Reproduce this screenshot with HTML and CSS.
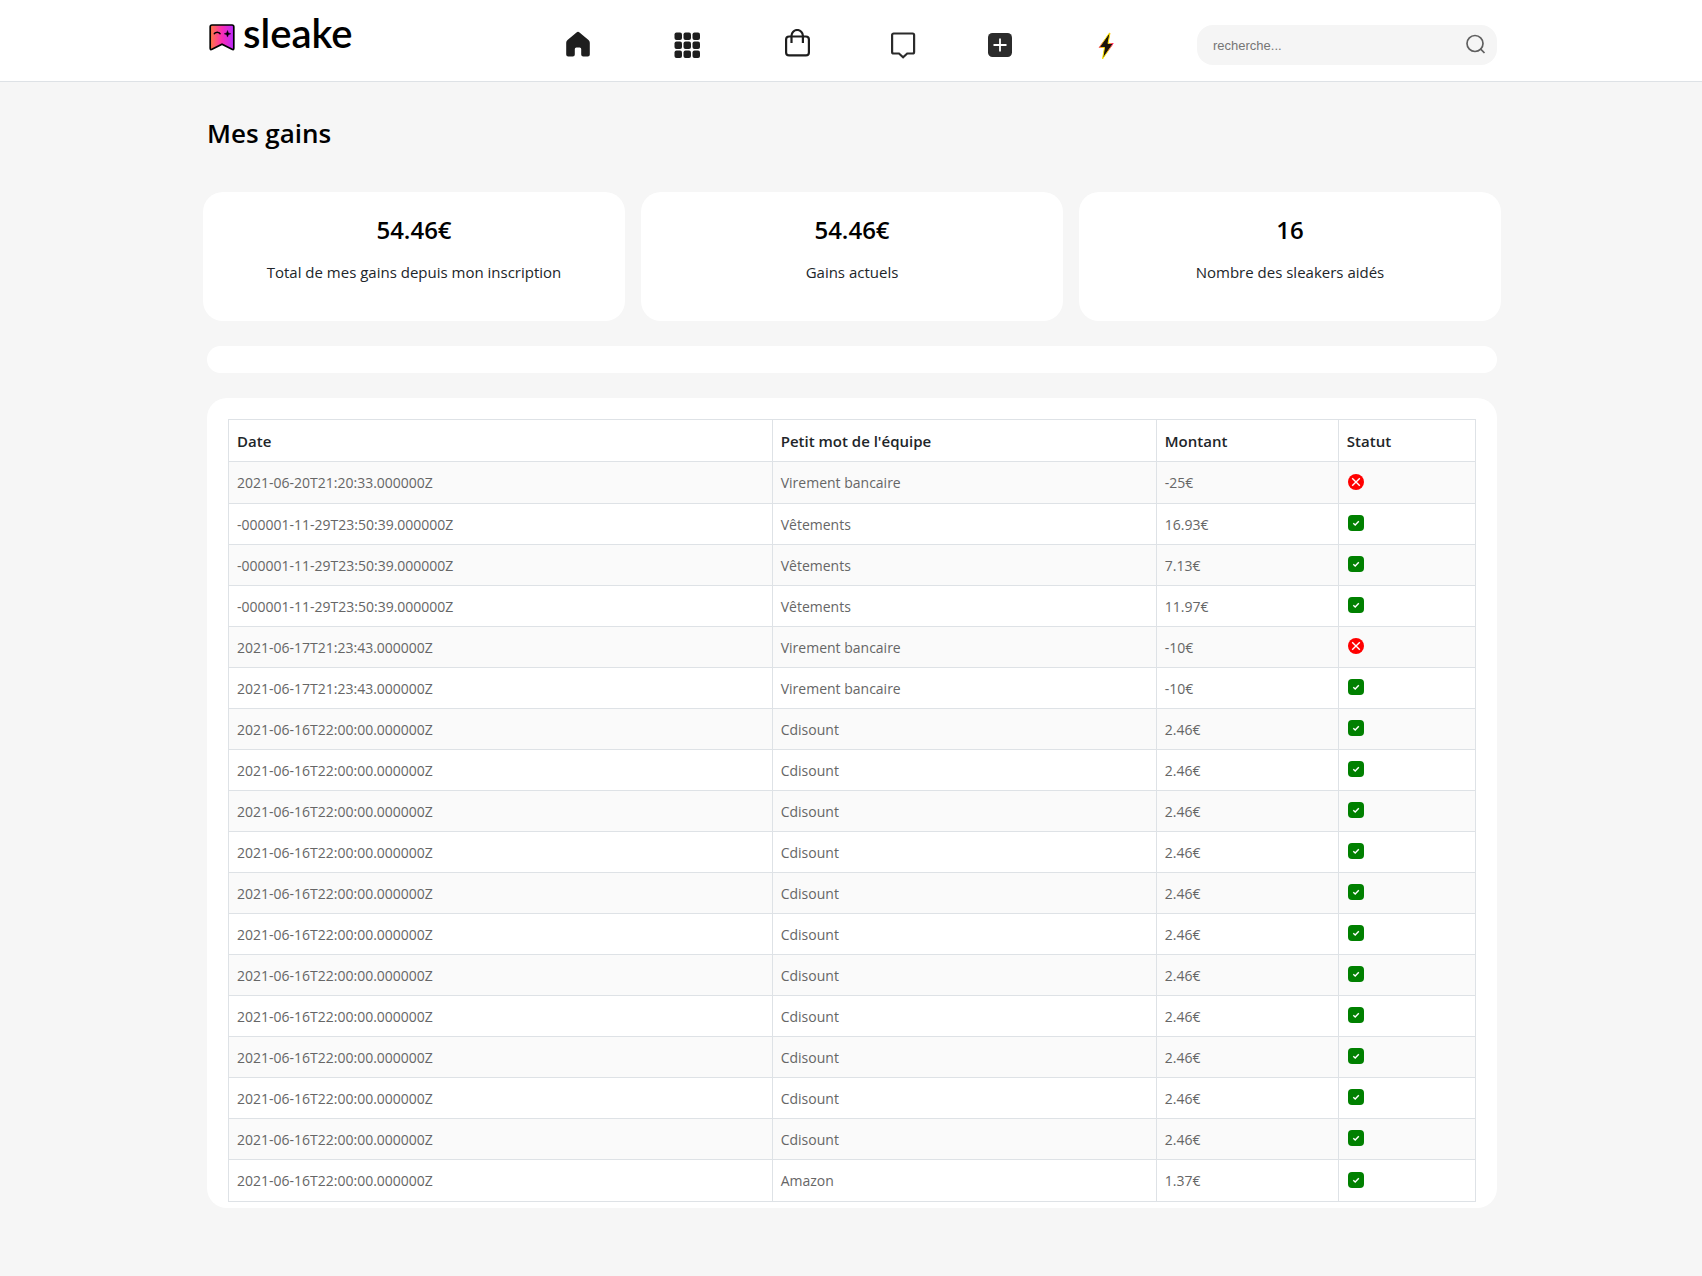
FILE: index.html
```html
<!DOCTYPE html>
<html lang="fr">
<head>
<meta charset="utf-8">
<meta name="viewport" content="width=device-width, initial-scale=1">
<title>Sleake - Mes gains</title>
<link rel="stylesheet" href="styles.css">
</head>
<body>
<svg class="sprite" aria-hidden="true">
  <symbol id="ok" viewBox="0 0 16 16">
    <rect width="16" height="16" rx="4" fill="#008000"/>
    <path d="M5.3 8.2l1.9 1.8 3.6-3.8" fill="none" stroke="#fff" stroke-width="1.4"/>
  </symbol>
  <symbol id="ko" viewBox="0 0 16 16">
    <circle cx="8" cy="8" r="8" fill="#f00"/>
    <path d="M4.2 4.2l7.6 7.6M11.8 4.2l-7.6 7.6" fill="none" stroke="#fff" stroke-width="1.4"/>
  </symbol>
</svg>
<header class="header">
  <div class="container header-inner">
    <a class="logo" href="#">
      <svg class="logo-mark" width="28" height="28" viewBox="0 0 28 28" aria-hidden="true">
        <defs>
          <linearGradient id="brand" x1="0" x2="1" y1="0" y2="0">
            <stop offset="0" stop-color="#ff7a3c"/>
            <stop offset=".5" stop-color="#fb2cb4"/>
            <stop offset="1" stop-color="#b92bff"/>
          </linearGradient>
        </defs>
        <path d="M5 2h20a1.800 1.800 0 0 1 1.800 1.800v21.400q0 2-1.800 1L15 21.200 5 26.200q-1.800 1-1.800-1V3.800A1.800 1.800 0 0 1 5 2z" fill="url(#brand)" stroke="#000" stroke-width="1.700"/>
        <path d="M7 11.300q.6-2 3.200-2t3.200 2" fill="none" stroke="#000" stroke-width="1.400"/>
        <path d="M20.500 7.500l.9 2.400 2.400.9-2.400.9-.9 2.400-.9-2.400-2.400-.9 2.400-.9z" stroke="#000" stroke-width=".4"/>
      </svg>
      <span class="logo-text">sleake</span>
    </a>
    <nav class="nav" aria-label="Navigation principale">
      <a href="#" aria-label="Accueil"><svg width="24" height="32" viewBox="0 0 24 32"><path d="M10.500 3.500q1.500-1.300 3 0l9 7.500q1.300 1 1.300 2.700V25.500q0 2-2 2h-4.600q-2 0-2-2V20q0-1.500-1.500-1.500h-3.400Q8.800 18.500 8.800 20v5.500q0 2-2 2H2.200q-2 0-2-2V13.700q0-1.700 1.300-2.700z" fill="#1e1e1e"/></svg></a>
      <a href="#" aria-label="Catégories"><svg width="26" height="32" viewBox="0 0 26 32" fill="#1e1e1e"><rect x=".5" y="3.500" width="7.500" height="7.500" rx="2"/><rect x="9.500" y="3.500" width="7.500" height="7.500" rx="2"/><rect x="18.500" y="3.500" width="7.500" height="7.500" rx="2"/><rect x=".5" y="12.500" width="7.500" height="7.500" rx="2"/><rect x="9.500" y="12.500" width="7.500" height="7.500" rx="2"/><rect x="18.500" y="12.500" width="7.500" height="7.500" rx="2"/><rect x=".5" y="21.500" width="7.500" height="7.500" rx="2"/><rect x="9.500" y="21.500" width="7.500" height="7.500" rx="2"/><rect x="18.500" y="21.500" width="7.500" height="7.500" rx="2"/></svg></a>
      <a href="#" aria-label="Boutique"><svg width="26" height="32" viewBox="0 0 26 32" fill="none" stroke="#1e1e1e" stroke-width="2.200"><rect x="1.100" y="7.500" width="22.800" height="18.900" rx="3"/><path d="M6.500 14V6.700a5.700 5.700 0 0 1 11.400 0V14"/></svg></a>
      <a href="#" aria-label="Messages"><svg width="26" height="32" viewBox="0 0 26 32" fill="none" stroke="#2b2b2b" stroke-width="2.200"><path d="M2.600 4.500h19a1.500 1.500 0 0 1 1.500 1.500v17a1.500 1.500 0 0 1-1.500 1.500h-5.400l-4.100 3.700L8 24.500H2.600A1.500 1.500 0 0 1 1.100 23V6a1.500 1.500 0 0 1 1.500-1.500z"/></svg></a>
      <a href="#" aria-label="Ajouter"><svg width="24" height="32" viewBox="0 0 24 32"><rect x="0" y="4" width="24" height="24" rx="4.500" fill="#2b2b2b"/><path d="M12 9.500v13M5.500 16h13" stroke="#fff" stroke-width="1.800"/></svg></a>
      <a href="#" aria-label="Flash"><svg width="18" height="32" viewBox="0 0 18 32"><defs><linearGradient id="flash" x1="0" x2="1" y1="0" y2=".3"><stop offset="0" stop-color="#ff1f88"/><stop offset=".45" stop-color="#ffe500"/><stop offset=".7" stop-color="#ffe500"/><stop offset="1" stop-color="#ff2a70"/></linearGradient></defs><path d="M11 4.500L1.200 18.500h5.300L4.500 30l10.700-15.500H10l2-10.500z" fill="#1b120c" stroke="url(#flash)" stroke-width="1"/></svg></a>
    </nav>
    <form class="search" role="search">
      <input type="search" aria-label="Recherche" placeholder="recherche...">
      <button type="submit" aria-label="Rechercher"><svg width="20" height="22" viewBox="0 0 20 22" fill="none" stroke="#5f5f5f" stroke-width="1.700"><circle cx="9" cy="9.500" r="8"/><path d="M14.200 14.700l4.300 4.300"/></svg></button>
    </form>
  </div>
</header>
<main class="container">
  <h1>Mes gains</h1>
  <section class="stats">
    <div class="card"><h2>54.46€</h2><p>Total de mes gains depuis mon inscription</p></div>
    <div class="card"><h2>54.46€</h2><p>Gains actuels</p></div>
    <div class="card"><h2>16</h2><p>Nombre des sleakers aidés</p></div>
  </section>
  <div class="strip"></div>
  <section class="panel">
    <table>
      <colgroup><col class="col-date"><col class="col-note"><col class="col-amount"><col class="col-status"></colgroup>
      <thead><tr><th scope="col">Date</th><th scope="col">Petit mot de l'équipe</th><th scope="col">Montant</th><th scope="col">Statut</th></tr></thead>
      <tbody>
        <tr><td>2021-06-20T21:20:33.000000Z</td><td>Virement bancaire</td><td>-25€</td><td><svg class="status" role="img" aria-label="Refusé"><use href="#ko"/></svg></td></tr>
        <tr><td>-000001-11-29T23:50:39.000000Z</td><td>Vêtements</td><td>16.93€</td><td><svg class="status" role="img" aria-label="Validé"><use href="#ok"/></svg></td></tr>
        <tr><td>-000001-11-29T23:50:39.000000Z</td><td>Vêtements</td><td>7.13€</td><td><svg class="status" role="img" aria-label="Validé"><use href="#ok"/></svg></td></tr>
        <tr><td>-000001-11-29T23:50:39.000000Z</td><td>Vêtements</td><td>11.97€</td><td><svg class="status" role="img" aria-label="Validé"><use href="#ok"/></svg></td></tr>
        <tr><td>2021-06-17T21:23:43.000000Z</td><td>Virement bancaire</td><td>-10€</td><td><svg class="status" role="img" aria-label="Refusé"><use href="#ko"/></svg></td></tr>
        <tr><td>2021-06-17T21:23:43.000000Z</td><td>Virement bancaire</td><td>-10€</td><td><svg class="status" role="img" aria-label="Validé"><use href="#ok"/></svg></td></tr>
        <tr><td>2021-06-16T22:00:00.000000Z</td><td>Cdisount</td><td>2.46€</td><td><svg class="status" role="img" aria-label="Validé"><use href="#ok"/></svg></td></tr>
        <tr><td>2021-06-16T22:00:00.000000Z</td><td>Cdisount</td><td>2.46€</td><td><svg class="status" role="img" aria-label="Validé"><use href="#ok"/></svg></td></tr>
        <tr><td>2021-06-16T22:00:00.000000Z</td><td>Cdisount</td><td>2.46€</td><td><svg class="status" role="img" aria-label="Validé"><use href="#ok"/></svg></td></tr>
        <tr><td>2021-06-16T22:00:00.000000Z</td><td>Cdisount</td><td>2.46€</td><td><svg class="status" role="img" aria-label="Validé"><use href="#ok"/></svg></td></tr>
        <tr><td>2021-06-16T22:00:00.000000Z</td><td>Cdisount</td><td>2.46€</td><td><svg class="status" role="img" aria-label="Validé"><use href="#ok"/></svg></td></tr>
        <tr><td>2021-06-16T22:00:00.000000Z</td><td>Cdisount</td><td>2.46€</td><td><svg class="status" role="img" aria-label="Validé"><use href="#ok"/></svg></td></tr>
        <tr><td>2021-06-16T22:00:00.000000Z</td><td>Cdisount</td><td>2.46€</td><td><svg class="status" role="img" aria-label="Validé"><use href="#ok"/></svg></td></tr>
        <tr><td>2021-06-16T22:00:00.000000Z</td><td>Cdisount</td><td>2.46€</td><td><svg class="status" role="img" aria-label="Validé"><use href="#ok"/></svg></td></tr>
        <tr><td>2021-06-16T22:00:00.000000Z</td><td>Cdisount</td><td>2.46€</td><td><svg class="status" role="img" aria-label="Validé"><use href="#ok"/></svg></td></tr>
        <tr><td>2021-06-16T22:00:00.000000Z</td><td>Cdisount</td><td>2.46€</td><td><svg class="status" role="img" aria-label="Validé"><use href="#ok"/></svg></td></tr>
        <tr><td>2021-06-16T22:00:00.000000Z</td><td>Cdisount</td><td>2.46€</td><td><svg class="status" role="img" aria-label="Validé"><use href="#ok"/></svg></td></tr>
        <tr><td>2021-06-16T22:00:00.000000Z</td><td>Amazon</td><td>1.37€</td><td><svg class="status" role="img" aria-label="Validé"><use href="#ok"/></svg></td></tr>
      </tbody>
    </table>
  </section>
</main>
</body>
</html>
```
FILE: styles.css
```css
* { box-sizing: border-box; }

body {
  margin: 0;
  background: #f6f6f6;
  color: #212529;
  font: 400 14px/24px "Segoe UI", "Open Sans", "Noto Sans", sans-serif;
}

h1, h2, p { margin: 0; }

.sprite { display: none; }

.container {
  max-width: 1292px;
  margin: 0 auto;
  padding-left: 2px;
}

/* Header */
.header {
  background: #fff;
  border-bottom: 1px solid #dee2e6;
}

.header-inner {
  display: grid;
  grid-template-columns: 359px 1fr 300px;
  align-items: center;
  height: 81px;
  padding-top: 8px;
}

.logo {
  display: flex;
  align-items: center;
  gap: 8px;
  margin-bottom: 24px;
  color: #000;
  text-decoration: none;
}

.logo-mark { margin-top: 8px; }

.logo-text {
  font: 600 40px/48px Lato, sans-serif;
}

.nav {
  display: grid;
  grid-template-columns: 108fr 111fr 106fr 97fr 110fr 99fr;
}

.nav a { justify-self: start; }
.nav svg { display: block; }

.search {
  display: flex;
  align-items: center;
  height: 40px;
  padding: 0 11px 0 16px;
  border-radius: 16px;
  background: #f5f5f5;
}

.search input {
  flex: 1;
  min-width: 0;
  padding: 2px 0 0;
  border: 0;
  background: none;
  font: 13px/20px "Liberation Sans", Arial, sans-serif;
}

.search input::placeholder { color: #757575; }

.search button {
  display: flex;
  padding: 0;
  border: 0;
  background: none;
}

/* Earnings */
h1 {
  padding: 31px 0 33px;
  color: #000;
  font-size: 26px;
  font-weight: 600;
  line-height: 40px;
}

.stats {
  display: grid;
  grid-template-columns: repeat(3, 1fr);
  gap: 16px;
  margin: 6px -4px 25px;
}

.card {
  padding: 20px 16px 36px;
  border-radius: 20px;
  background: #fff;
  text-align: center;
}

.card h2 {
  margin-bottom: 12px;
  color: #000;
  font-size: 24px;
  font-weight: 600;
  line-height: 36px;
}

.card p { font-size: 15px; line-height: 25px; }

.strip {
  height: 27px;
  margin-bottom: 25px;
  border-radius: 20px;
  background: #fff;
}

.panel {
  padding: 21px 21px 6px;
  border-radius: 20px;
  background: #fff;
}

table {
  width: 100%;
  border-collapse: collapse;
  table-layout: fixed;
}

.col-date { width: 43.6%; }
.col-note { width: 30.8%; }
.col-amount { width: 14.6%; }
.col-status { width: 11%; }

th, td {
  height: 41px;
  padding: 1px 8px 0;
  border: 1px solid #dee2e6;
  text-align: left;
}

th { height: 42px; font-size: 15px; font-weight: 600; }
td { color: #666; }
tbody tr:first-child td,
tbody tr:last-child td { height: 42px; }
tbody tr:nth-child(odd) { background: #fafafa; }

.status {
  display: block;
  width: 16px;
  height: 16px;
  margin: 0 1px 3px;
}
```
